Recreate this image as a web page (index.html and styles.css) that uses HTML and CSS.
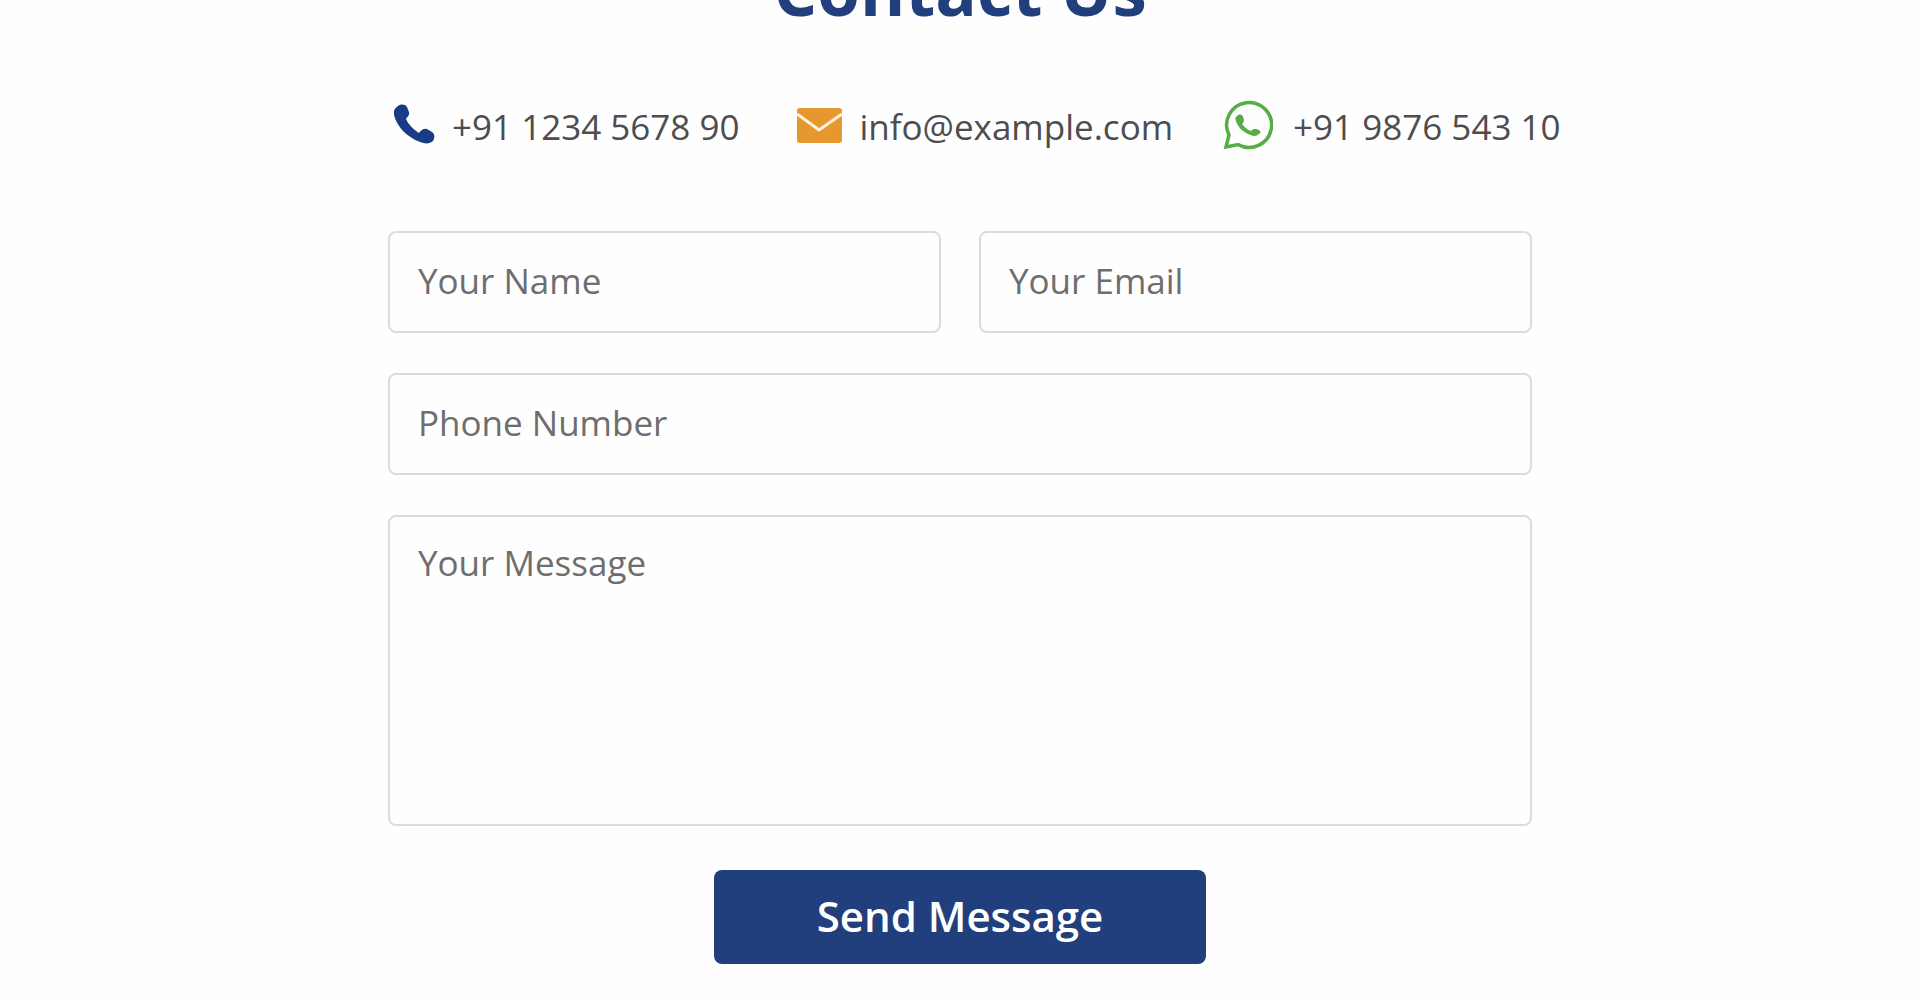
FILE: index.html
```
<!DOCTYPE html>
<html lang="en">
<head>
  <meta charset="UTF-8">
  <meta name="viewport" content="width=device-width, initial-scale=1.0">
  <title>Contact Us</title>
  <link rel="stylesheet" href="styles.css">
</head>
<body>
  <section class="contact">
    <h1>Contact Us</h1>

    <div class="contact-info">
      <a class="phone" href="tel:+911234567890">
        <svg width="42" height="42" viewBox="0 0 42 42" aria-hidden="true">
          <path fill="#1a3c87" d="M4 2C7 0 11 0 13 3L15 8C16 11 13 13 12 15C14 20 20 26 25 29C27 26 30 24 33 25L38 28C41 30 41 34 39 37C36 40 31 40 26 38C13 33 3 23 0 11C-1 7 1 4 4 2Z"/>
        </svg>
        <span>+91 1234 5678 90</span>
      </a>
      <a class="email" href="mailto:info@example.com">
        <svg width="46" height="42" viewBox="0 0 46 42" aria-hidden="true">
          <rect x="0" y="4" width="45" height="35" rx="3" fill="#e6982f"/>
          <path d="M0 10L22 26L45 10" fill="none" stroke="#fff3dc" stroke-width="3"/>
        </svg>
        <span>info@example.com</span>
      </a>
      <a class="whatsapp" href="https://wa.me/919876543210">
        <svg width="50" height="50" viewBox="0 0 50 50" aria-hidden="true">
          <path d="M3 47L6 35A22.5 22.5 0 1 1 15 44.5Z" fill="none" stroke="#56ad45" stroke-width="3.5"/>
          <path fill="#56ad45" d="M14 16C16 14 19 14 20 17L21 20C21 22 20 23 19 24C21 27 25 30 28 31C30 29 31 29 33 29L36 30C38 31 38 33 36 34C33 37 29 36 25 34C19 31 15 27 13 21C12 19 12 17 14 16Z"/>
        </svg>
        <span>+91 9876 543 10</span>
      </a>
    </div>

    <form class="contact-form">
      <div class="form-row">
        <input type="text" name="name" placeholder="Your Name" aria-label="Your Name">
        <input type="email" name="email" placeholder="Your Email" aria-label="Your Email">
      </div>
      <input type="tel" name="phone" placeholder="Phone Number" aria-label="Phone Number">
      <textarea name="message" placeholder="Your Message" aria-label="Your Message"></textarea>
      <button type="submit">Send Message</button>
    </form>
  </section>
</body>
</html>
```

FILE: styles.css
```
* {
  box-sizing: border-box;
}
body {
  margin: 0;
  font-family: "Open Sans", sans-serif;
  background-color: #fefefe;
  overflow-x: hidden;
}
.contact {
  max-width: 1144px;
  margin: -61px auto 0;
  padding-bottom: 34px;
}
h1 {
  margin: 0;
  font-size: 69px;
  line-height: 100px;
  text-align: center;
  color: #203f7c;
}
.contact-info {
  display: flex;
  align-items: center;
  margin: 57px 0 77px 6px;
  line-height: 54px;
}
.contact-info a {
  display: flex;
  align-items: center;
  gap: 16px;
  font-size: 35px;
  color: #4d4d4f;
  text-decoration: none;
  white-space: nowrap;
}
.contact-info .phone {
  margin-right: 58px;
}
.contact-info .email {
  margin-right: 50px;
}
.contact-info .whatsapp {
  gap: 20px;
}
.contact-info span {
  padding-top: 4px;
}
.contact-info svg {
  flex-shrink: 0;
}
.contact-form {
  display: flex;
  flex-direction: column;
  gap: 40px;
}
.form-row {
  display: grid;
  grid-template-columns: 1fr 1fr;
  gap: 38px;
}
input,
textarea {
  width: 100%;
  padding: 20px 28px 24px;
  font-family: inherit;
  font-size: 35px;
  line-height: 52px;
  color: #4d4d4f;
  background-color: #fefefe;
  border: 2px solid #dcdcdc;
  border-radius: 8px;
}
input {
  height: 102px;
}
textarea {
  display: block;
  height: 311px;
  resize: none;
}
::placeholder {
  color: #6e6e6e;
  opacity: 1;
}
button {
  align-self: center;
  width: 492px;
  max-width: 100%;
  margin-top: 4px;
  padding: 17px 18px 19px;
  font-family: inherit;
  font-size: 42px;
  font-weight: 600;
  line-height: 58px;
  color: #fff;
  background-color: #213f7d;
  border: none;
  border-radius: 8px;
  cursor: pointer;
}
button:hover {
  background-color: #1a3468;
}
```
